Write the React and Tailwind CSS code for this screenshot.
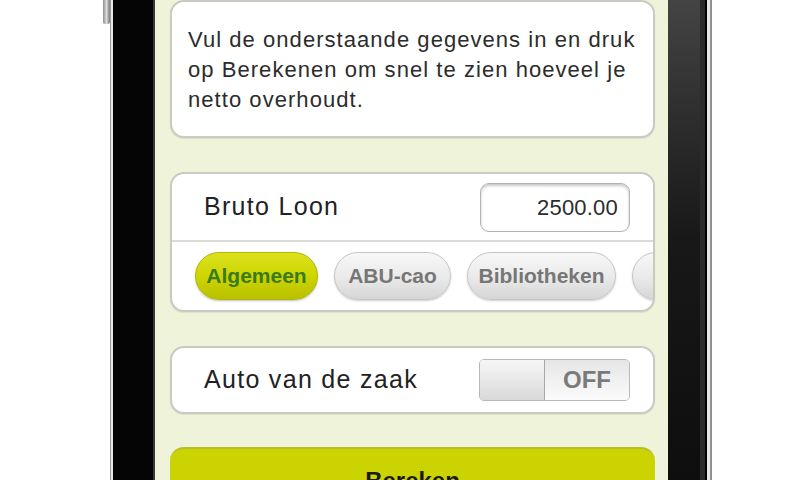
import React from 'react';

const pills = [
  { label: 'Algemeen', active: true, w: 'w-[123px]' },
  { label: 'ABU-cao', active: false, w: 'w-[117px]' },
  { label: 'Bibliotheken', active: false, w: 'w-[149px]' },
  { label: '', active: false, w: 'w-[120px]' },
];

function Card({ className = '', children }) {
  return (
    <div className={`shrink-0 bg-white rounded-[14px] border-2 border-[#cacac4] shadow-[0_1px_1px_rgba(0,0,0,0.08)] ${className}`}>
      {children}
    </div>
  );
}

function Pill({ label, active, w }) {
  if (active) {
    return (
      <div className={`${w} h-[48px] shrink-0 rounded-full flex items-center justify-center border border-[#b0b800] bg-gradient-to-b from-[#dbe21c] via-[#cdd500] to-[#b9c100] shadow-[0_1px_2px_rgba(0,0,0,0.25)] text-[21px] font-bold text-[#3a7a1c]`}>
        {label}
      </div>
    );
  }
  return (
    <div className={`${w} h-[48px] shrink-0 rounded-full flex items-center justify-center border border-[#c6c6c6] bg-gradient-to-b from-[#f7f7f7] via-[#ebebeb] to-[#d6d6d6] shadow-[0_1px_2px_rgba(0,0,0,0.2)] text-[21px] font-bold text-[#767676] whitespace-nowrap`}>
      {label}
    </div>
  );
}

export default function App() {
  return (
    <div className="w-[800px] h-[480px] bg-white flex overflow-hidden font-['Liberation_Sans',Arial,sans-serif]">
      <div className="w-[103px] shrink-0" />
      {/* side switch */}
      <div className="w-[7px] shrink-0 flex flex-col">
        <div className="h-[24px] rounded-b-[2px] bg-gradient-to-r from-[#8c8c8c] via-[#dcdcdc] to-[#7a7a7a]" />
      </div>
      {/* left rim */}
      <div className="w-[1px] shrink-0 bg-[#9a9a9a]" />
      <div className="w-[2px] shrink-0 bg-[#e8e8e8]" />
      <div className="w-[40px] shrink-0 bg-[#050505]" />
      <div className="w-[2px] shrink-0 bg-[#3a3a36]" />

      {/* screen */}
      <div className="w-[513px] shrink-0 bg-[#eef3d9] pl-[15px] pr-[13px] flex flex-col overflow-hidden">
        <Card className="h-[138px] pl-[16px] pt-[23px]">
          <p className="text-[22px] leading-[30px] tracking-[1.05px] text-[#2c2c2c] whitespace-nowrap">
            Vul de onderstaande gegevens in en druk
            <br />
            op Berekenen om snel te zien hoeveel je
            <br />
            netto overhoudt.
          </p>
        </Card>

        <Card className="mt-[34px] h-[140px] flex flex-col overflow-hidden">
          <div className="h-[66px] shrink-0 flex items-center justify-between pl-[32px] pr-[23px]">
            <span className="text-[25px] tracking-[1.3px] text-[#222]">Bruto Loon</span>
            <div className="w-[150px] h-[49px] rounded-[9px] border border-[#b3b3b3] bg-white shadow-[inset_0_2px_3px_rgba(0,0,0,0.22)] flex items-center justify-end pr-[11px]">
              <span className="text-[22px] tracking-[0.2px] text-[#2c2c2c]">2500.00</span>
            </div>
          </div>
          <div className="h-[2px] shrink-0 bg-[#dadad6]" />
          <div className="flex-1 flex items-center gap-4 pl-[23px] overflow-hidden">
            {pills.map((p, i) => (
              <Pill key={i} {...p} />
            ))}
          </div>
        </Card>

        <Card className="mt-[34px] h-[68px] flex items-center justify-between pl-[32px] pr-[23px]">
          <span className="text-[25px] tracking-[1.3px] text-[#222]">Auto van de zaak</span>
          <div className="w-[151px] h-[42px] rounded-[5px] border border-[#b8b8b8] overflow-hidden flex">
            <div className="w-[65px] bg-gradient-to-b from-[#f6f6f6] to-[#d9d9d9] border-r border-[#a8a8a8]" />
            <div className="flex-1 bg-gradient-to-b from-[#e6e6e6] to-[#fbfbfb] flex items-center justify-center">
              <span className="text-[24px] font-bold text-[#7a7a7a]">OFF</span>
            </div>
          </div>
        </Card>

        <div className="mt-[33px] h-[80px] shrink-0 rounded-t-[14px] border-t-2 border-[#b6bd2a] bg-[#cbd400] pt-[18px] text-center">
          <span className="text-[24px] leading-[28px] font-bold text-[#1a1a1a]">Bereken</span>
        </div>
      </div>

      {/* right rim */}
      <div className="w-[32px] shrink-0 bg-gradient-to-b from-[#444] via-[#181818] to-[#0e0e0e]" />
      <div className="w-[5px] shrink-0 bg-[#2a2a2a]" />
      <div className="w-[2px] shrink-0 bg-black" />
      <div className="w-[3px] shrink-0 bg-[#e6e6e6]" />
      <div className="w-[2px] shrink-0 bg-[#909090]" />
      <div className="flex-1" />
    </div>
  );
}
